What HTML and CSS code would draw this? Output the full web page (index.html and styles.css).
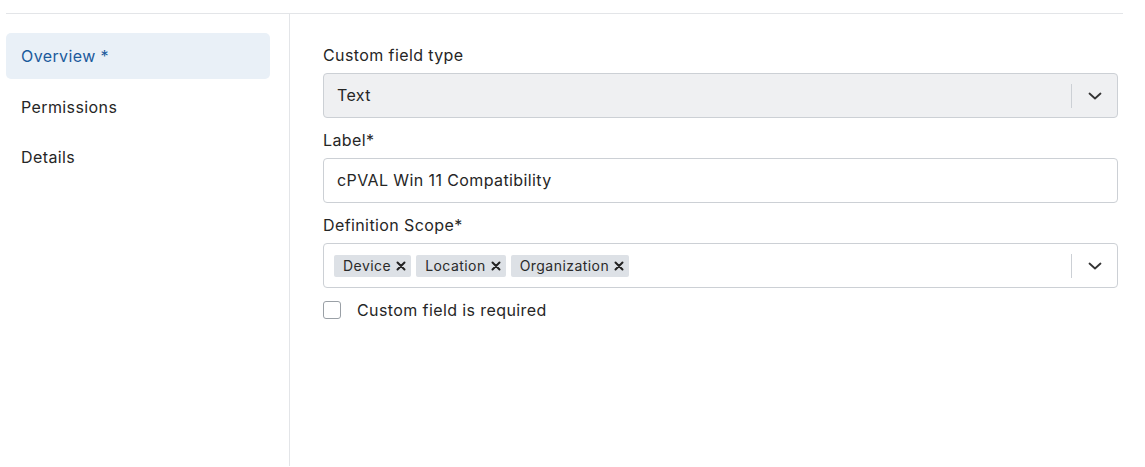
FILE: index.html
```html
<!DOCTYPE html>
<html>
<head>
<meta charset="utf-8">
<link rel="stylesheet" href="styles.css">
</head>
<body>
<div class="frame">
  <nav class="sidebar">
    <div class="nav-item active">Overview *</div>
    <div class="nav-item">Permissions</div>
    <div class="nav-item">Details</div>
  </nav>
  <main class="main">
    <div class="field">
      <div class="label">Custom field type</div>
      <div class="select disabled">
        <div class="value">Text</div>
        <div class="indicators">
          <span class="sep"></span>
          <svg class="chev" width="14" height="8" viewBox="0 0 14 8"><path d="M1.5 1.5 L7 6.5 L12.5 1.5" fill="none" stroke="#333" stroke-width="1.8" stroke-linecap="round" stroke-linejoin="round"/></svg>
        </div>
      </div>
    </div>
    <div class="field">
      <div class="label">Label*</div>
      <div class="input"><span class="value">cPVAL Win 11 Compatibility</span></div>
    </div>
    <div class="field">
      <div class="label">Definition Scope*</div>
      <div class="select">
        <div class="chips">
          <span class="chip">Device<svg class="x" width="10" height="10" viewBox="0 0 10 10"><path d="M1.5 1.5 L8.5 8.5 M8.5 1.5 L1.5 8.5" stroke="#222" stroke-width="2" stroke-linecap="round"/></svg></span>
          <span class="chip">Location<svg class="x" width="10" height="10" viewBox="0 0 10 10"><path d="M1.5 1.5 L8.5 8.5 M8.5 1.5 L1.5 8.5" stroke="#222" stroke-width="2" stroke-linecap="round"/></svg></span>
          <span class="chip">Organization<svg class="x" width="10" height="10" viewBox="0 0 10 10"><path d="M1.5 1.5 L8.5 8.5 M8.5 1.5 L1.5 8.5" stroke="#222" stroke-width="2" stroke-linecap="round"/></svg></span>
        </div>
        <div class="indicators">
          <span class="sep"></span>
          <svg class="chev" width="14" height="8" viewBox="0 0 14 8"><path d="M1.5 1.5 L7 6.5 L12.5 1.5" fill="none" stroke="#333" stroke-width="1.8" stroke-linecap="round" stroke-linejoin="round"/></svg>
        </div>
      </div>
    </div>
    <label class="check">
      <span class="box"></span>
      <span>Custom field is required</span>
    </label>
  </main>
</div>
</body>
</html>
```

FILE: styles.css
```css
* { box-sizing: border-box; }
html, body { margin: 0; background: #fff; }
body {
  font-family: Inter, "Noto Sans", sans-serif;
  font-size: 16px;
  letter-spacing: 0.4px;
  color: #262626;
}
.frame {
  margin: 13px 22px 0 6px;
  border-top: 1px solid #e3e5e8;
  display: flex;
  height: 453px;
}
.sidebar {
  width: 283px;
  padding: 19px 19px 0 0;
  display: flex;
  flex-direction: column;
  gap: 4.5px;
}
.nav-item {
  height: 46px;
  display: flex;
  align-items: center;
  padding-left: 15px;
  border-radius: 5px;
  color: #262626;
}
.nav-item.active {
  background: #e9f0f7;
  color: #1b5a9c;
}
.main {
  flex: 1;
  border-left: 1px solid #e3e5e8;
  padding: 31px 5px 0 33px;
  display: flex;
  flex-direction: column;
  gap: 12px;
}
.field { display: flex; flex-direction: column; gap: 8px; }
.label { line-height: 20px; }
.select, .input {
  height: 45px;
  border: 1px solid #ccd0d5;
  border-radius: 4px;
  display: flex;
  align-items: center;
}
.select.disabled { background: #eff0f2; }
.value { flex: 1; padding: 0 0 2px 13px; }
.chips { flex: 1; display: flex; gap: 5px; padding-left: 10px; }
.chip {
  height: 22px;
  background: #dde1e6;
  border-radius: 2px;
  font-size: 14px;
  letter-spacing: 0.45px;
  display: flex;
  align-items: center;
  padding: 0 5px 0 9px;
  color: #2a2a2a;
}
.chip .x {
  margin-left: 5px;
  display: block;
}
.indicators {
  display: flex;
  align-items: center;
  height: 100%;
}
.sep {
  width: 1px;
  height: 24px;
  background: #ccd0d5;
}
.chev { margin: 0 15px 0 16px; display: block; }
.check {
  display: flex;
  align-items: center;
  gap: 16px;
}
.box {
  width: 18px;
  height: 18px;
  border: 1px solid #9aa0a6;
  border-radius: 3px;
  background: #fff;
}
```
